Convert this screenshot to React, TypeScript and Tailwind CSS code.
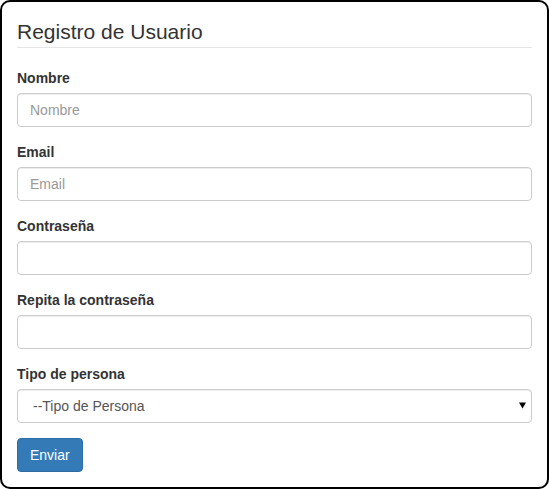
export default function App() {
  const inputCls =
    "block w-full h-[34px] px-[12px] py-[6px] text-[14px] text-[#555] bg-white border border-[#ccc] rounded-[4px] shadow-[inset_0_1px_1px_rgba(0,0,0,0.075)] placeholder:text-[#999] outline-none";
  const labelCls = "block mb-[5px] text-[14px] leading-[20px] font-bold text-[#333]";

  return (
    <div
      className="w-[549px] h-[489px] border-2 border-black rounded-[10px] bg-white p-[15px] text-[#333]"
      style={{ fontFamily: '"Liberation Sans", "Helvetica Neue", Helvetica, Arial, sans-serif' }}
    >
      <form onSubmit={(e) => e.preventDefault()}>
        <div className="text-[21px] leading-[30px] text-[#333] border-b border-[#e5e5e5] mb-[20px]">
          Registro de Usuario
        </div>

        <div className="mb-[15px]">
          <label className={labelCls}>Nombre</label>
          <input type="text" placeholder="Nombre" className={inputCls} />
        </div>

        <div className="mb-[15px]">
          <label className={labelCls}>Email</label>
          <input type="email" placeholder="Email" className={inputCls} />
        </div>

        <div className="mb-[15px]">
          <label className={labelCls}>Contraseña</label>
          <input type="password" className={inputCls} />
        </div>

        <div className="mb-[15px]">
          <label className={labelCls}>Repita la contraseña</label>
          <input type="password" className={inputCls} />
        </div>

        <div className="mb-[15px]">
          <label className={labelCls}>Tipo de persona</label>
          <div className="relative">
            <select className={inputCls + " appearance-none pl-[15px]"} defaultValue="">
              <option value="">--Tipo de Persona</option>
            </select>
            <span className="absolute right-[6px] top-[12px] pointer-events-none">
              <svg width="7" height="8" viewBox="0 0 7 8">
                <path d="M0 1.5 L7 1.5 L3.5 7.5 Z" fill="#000" />
              </svg>
            </span>
          </div>
        </div>

        <button
          type="submit"
          className="h-[34px] px-[12px] py-[6px] text-[14px] leading-[20px] text-white bg-[#337ab7] border border-[#2e6da4] rounded-[4px]"
        >
          Enviar
        </button>
      </form>
    </div>
  );
}
